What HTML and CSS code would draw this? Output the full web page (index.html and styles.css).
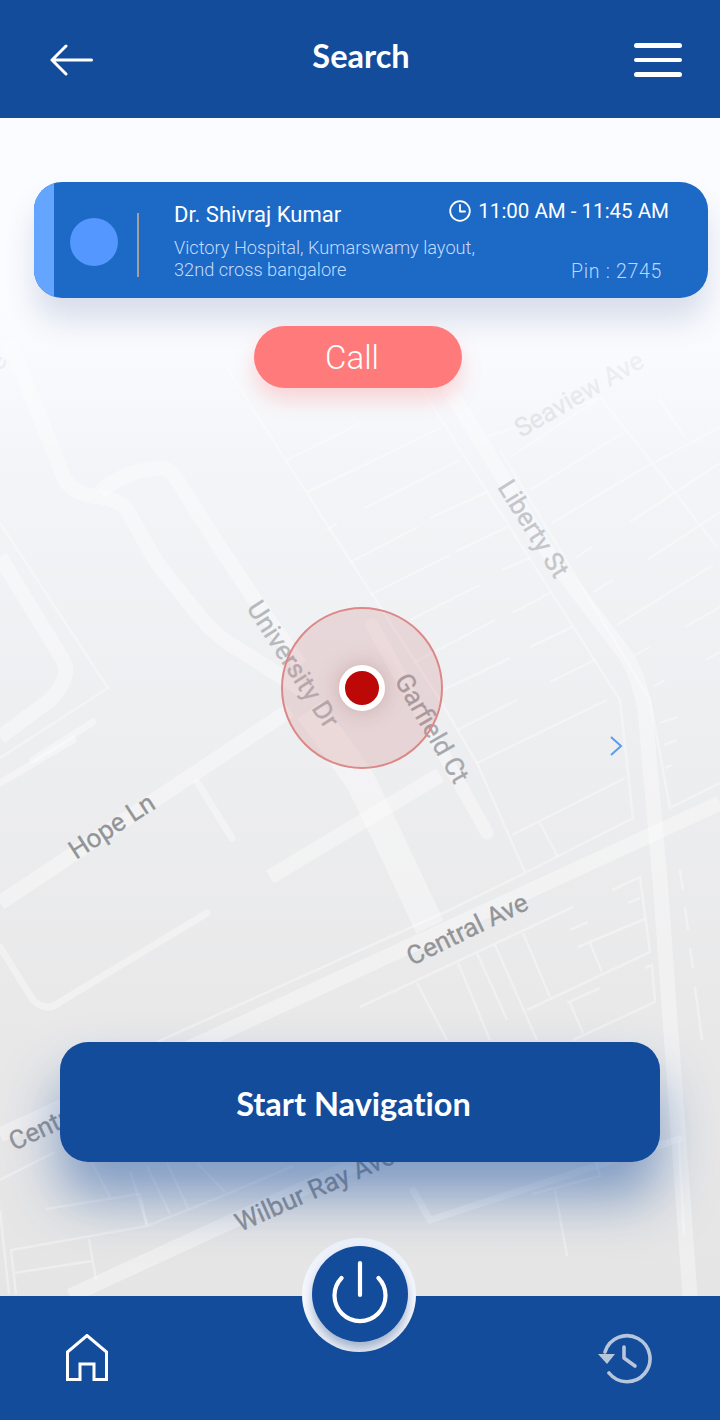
FILE: index.html
```html
<!DOCTYPE html>
<html lang="en">
<head>
<meta charset="utf-8">
<title>Search</title>
<link rel="stylesheet" href="styles.css">
</head>
<body>
<div class="app">
  <header class="topbar">
    <svg class="icon-back" viewBox="0 0 43 32" width="43" height="32"><path d="M41.5 16H2M16 2L2 16l14 14" /></svg>
    <h1 class="title">Search</h1>
    <div class="burger"><span></span><span></span><span></span></div>
  </header>
  <main class="stage">
    <svg class="map" viewBox="0 118 720 1178" preserveAspectRatio="none">
      <g class="road-wide">
        <path d="M8 340L33 400L65 480Q75 495 100 497Q120 500 127 510L157 563L200 617Q220 640 240 650L310 695"/>
        <path d="M100 492Q125 470 160 468Q170 468 177 480L217 543L253 597L300 665"/>
        <path d="M0 557L63 660Q72 677 50 700L0 737"/>
        <path d="M0 903L290 710"/>
        <path d="M270 877L440 775"/>
        <path class="road-cap" d="M372 625L487 833"/>
        <path d="M430 360L460 407L553 560L627 657Q640 680 645 710L660 880L690 1296"/>
        <path d="M0 1135L720 803"/>
        <path d="M70 1296L300 1190L420 1135"/>
      </g>
      <g class="road-major">
        <path d="M310 710L360 780L383 827L430 927"/>
      </g>
      <g class="road-mid">
        <path d="M93 722L33 760"/>
        <path d="M73 740L0 783"/>
        <path d="M197 782L232 838"/>
        <path d="M0 947L33 1000Q47 1013 60 1002L207 913"/>
        <path d="M413 1190L430 1220L679 1139"/>
      </g>
      <g class="road-thin">
        <path d="M0 523L108 688L0 758"/>
        <path d="M225 365L247 400L440 700L477 763L525 872"/>
        <path d="M410 370L433 407L620 700L633 818L527 872L445 912L157 1042"/>
        <path d="M500 450L650 700L670 808L720 783"/>
        <path d="M512 835L625 778M540 823L558 857M457 730L517 700M477 763L607 700"/>
        <path d="M660 723L677 717M664 745L677 740M665 768L672 765"/>
        <path d="M360 1007L573 907M417 983L447 1040M458 963L490 1040M477 953L507 1020M495 945L537 1040M523 933L550 997"/>
        <path d="M527 1010L650 952L640 877L612 890M578 947L647 918M590 943L602 972M570 930L588 922M628 903L640 898M567 1003L600 988M570 1003L583 1033M573 1040L655 1002L652 965L645 968"/>
        <path d="M680 870L683 890M685 907L688 930M690 948L693 968M695 987L702 1040"/>
        <path d="M487 437L603 397M510 457L600 398L650 460L717 547M530 490L623 433M552 523L640 470L720 427M630 522L720 463M647 560L720 512"/>
        <path d="M575 558L592 547M593 592L613 580M617 625L713 565M685 627L720 607M635 655L650 647M653 687L665 680M705 660L720 652M658 397L685 437"/>
        <path d="M360 467L442 427M365 508L460 460M430 518L487 492M360 557L418 527M455 552L507 527M370 595L450 555M502 570L530 558M410 620L480 585M512 613L550 593M413 663L495 620M530 647L572 627M443 690L510 658M550 682L595 660"/>
        <path d="M287 460L360 423M307 492L360 467M327 530L337 523M350 563L360 557"/>
        <path d="M0 1180L55 1152M92 1163L110 1197M130 1171L147 1225M147 1166L170 1214M167 1163L188 1208M197 1163L225 1192"/>
        <path d="M46 1209L140 1194L147 1226L11 1250L16 1294M147 1226L220 1197L293 1166M14 1273L92 1261M89 1239L96 1280M0 1210L9 1294"/>
        <path d="M555 1190L567 1256M532 1194L600 1176L592 1149M679 1142L684 1235"/>
      </g>
      <text class="map-label faint" transform="translate(1 372) rotate(-60)">e</text>
      <text class="map-label faint" transform="translate(521 438) rotate(-30)">Seaview Ave</text>
      <text class="map-label pale" transform="translate(497 487) rotate(58)">Liberty St</text>
      <text class="map-label uni" transform="translate(246 608) rotate(57)">University Dr</text>
      <text class="map-label mid" transform="translate(394 680) rotate(60)">Garfield Ct</text>
      <text class="map-label dark" transform="translate(76 860) rotate(-33)">Hope Ln</text>
      <text class="map-label dark" transform="translate(412 966) rotate(-26)">Central Ave</text>
      <text class="map-label dark" transform="translate(14 1151) rotate(-25)">Central Ave</text>
      <text class="map-label dark" transform="translate(240 1232) rotate(-24)">Wilbur Ray Ave</text>
    </svg>
    <div class="map-fade"></div>
    <section class="card">
      <div class="card-stripe"></div>
      <div class="avatar"></div>
      <div class="rule"></div>
      <div class="card-info">
        <div class="doctor">Dr. Shivraj Kumar</div>
        <div class="address">Victory Hospital, Kumarswamy layout,<br>32nd cross bangalore</div>
      </div>
      <div class="card-meta">
        <div class="time">
          <svg class="icon-clock" viewBox="0 0 22 22" width="22" height="22"><circle cx="11" cy="11" r="9.8"/><path d="M11 5v6.5h5"/></svg>
          <span>11:00 AM - 11:45 AM</span>
        </div>
        <div class="pin">Pin : 2745</div>
      </div>
    </section>
    <div class="call">Call</div>
    <div class="radar"><div class="dot"></div></div>
    <svg class="chevron" viewBox="0 0 14 20" width="14" height="20"><path d="M2 1l10 9-10 9"/></svg>
    <div class="start">Start Navigation</div>
  </main>
  <footer class="tabbar">
    <svg class="icon-home" viewBox="0 0 42 47" width="42" height="47"><path d="M1.5 45.5V18L21 1.5 40.5 18v27.5H28V30H14v15.5z"/></svg>
    <svg class="icon-history" viewBox="0 0 56 52" width="56" height="52"><path class="arc" d="M7 20A23 23 0 1 1 11 41"/><path class="fill" d="M0 22h17l-8 10z"/><path class="arc" d="M26 15v11l11 8"/></svg>
  </footer>
  <div class="power">
    <div class="power-core">
      <svg viewBox="0 0 64 72" width="64" height="72"><path d="M32 5v32M13.5 20A25.5 25.5 0 1 0 50.5 20" /></svg>
    </div>
  </div>
</div>
</body>
</html>
```
FILE: styles.css
```css
* { box-sizing: border-box; }
html, body { margin: 0; padding: 0; }
body { width: 720px; height: 1420px; overflow: hidden; font-family: Roboto, "Liberation Sans", sans-serif; }
.app { position: relative; width: 720px; height: 1420px; display: flex; flex-direction: column; }
.topbar { height: 118px; background: #144c9c; display: grid; grid-template-columns: 1fr auto 1fr; align-items: center; padding: 0 38px 4px 50px; flex: none; position: relative; z-index: 2; }
.icon-back { margin-top: 6px; }
.icon-back path { fill: none; stroke: #fff; stroke-width: 3; stroke-linecap: round; stroke-linejoin: round; }
.title { margin: 0 0 4px -10px; font: 700 32.5px Lato, sans-serif; font-variant-ligatures: none; color: #fff; }
.burger { width: 48px; justify-self: end; display: flex; flex-direction: column; gap: 10px; margin-top: 6px; }
.burger span { height: 4.5px; border-radius: 3px; background: #fff; }
.stage { flex: 1; position: relative; background: linear-gradient(180deg, #fbfcff 0%, #f4f6f9 25%, #eeeff1 50%, #e9e9ea 75%, #e5e5e5 100%); display: flex; flex-direction: column; align-items: flex-start; padding: 64px 12px 0 34px; }
.map { position: absolute; left: 0; top: 0; width: 720px; height: 1178px; }
.map-fade { position: absolute; left: 0; top: 0; width: 720px; height: 340px; background: linear-gradient(180deg, #fbfcff 50%, rgba(248,250,253,0) 100%); }
.road-wide path { fill: none; stroke: rgba(255,255,255,.36); stroke-width: 15; stroke-linejoin: round; }
.road-wide .road-cap { stroke-linecap: round; stroke-width: 13; }
.road-major path { fill: none; stroke: rgba(255,255,255,.36); stroke-width: 30; stroke-linejoin: round; }
.road-mid path { fill: none; stroke: rgba(255,255,255,.36); stroke-width: 7; stroke-linecap: round; stroke-linejoin: round; }
.road-thin path { fill: none; stroke: rgba(255,255,255,.34); stroke-width: 2.5; }
.map-label { font: 400 26px Roboto, sans-serif; stroke-width: .3px; }
.faint { fill: #dcdee3; stroke: #dcdee3; }
.pale { fill: #c4c6ca; stroke: #c4c6ca; }
.uni { fill: #b6b8bc; stroke: #b6b8bc; }
.mid { fill: #a6a8ac; stroke: #a6a8ac; }
.dark { fill: #939497; stroke: #939497; }
.card { position: relative; width: 674px; height: 116px; flex: none; border-radius: 28px; background: #1c69c6; overflow: hidden; display: flex; align-items: flex-start; box-shadow: 0 22px 30px rgba(40,70,130,.16); color: #fff; }
.card-stripe { width: 20px; height: 116px; flex: none; background: #64a5ff; }
.avatar { width: 48px; height: 48px; border-radius: 50%; background: #5497ff; margin: 36px 0 0 16px; flex: none; }
.rule { width: 2px; height: 64px; background: #a79f97; margin: 31px 0 0 19px; flex: none; }
.card-info { margin: 20px 0 0 35px; width: 260px; flex: none; white-space: nowrap; }
.doctor { font-size: 22px; font-weight: 400; line-height: 25px; }
.address { margin-top: 10px; font-size: 18.2px; font-weight: 300; line-height: 22px; color: #c2dcff; }
.card-meta { margin-left: auto; flex: none; display: flex; flex-direction: column; align-items: flex-end; padding: 17px 39px 0 0; }
.time { display: flex; align-items: center; gap: 7px; font-size: 20.5px; font-weight: 400; line-height: 24px; white-space: nowrap; }
.icon-clock { fill: none; stroke: #fff; stroke-width: 1.8; stroke-linecap: round; stroke-linejoin: round; flex: none; }
.pin { font-size: 19.5px; font-weight: 300; line-height: 24px; color: #b9d7ff; margin-top: 37px; margin-right: 7px; letter-spacing: .7px; }
.call { position: relative; width: 208px; height: 62px; margin: 28px 0 0 220px; flex: none; border-radius: 31px; background: #ff7b7b; color: #fff; font-size: 33px; font-weight: 300; display: flex; align-items: center; justify-content: center; padding-right: 12px; box-shadow: 0 12px 20px rgba(255,120,120,.28); }
.radar { position: absolute; left: 281px; top: 489px; width: 162px; height: 162px; border-radius: 50%; border: 2px solid #dd8888; background: rgba(190,80,80,.16); display: flex; align-items: center; justify-content: center; }
.dot { width: 46px; height: 46px; border-radius: 50%; background: #bd0808; border: 6px solid #fff; box-shadow: 0 0 22px rgba(120,40,40,.25); }
.chevron { position: absolute; left: 609px; top: 618px; }
.chevron path { fill: none; stroke: #5b9bf0; stroke-width: 2; }
.start { position: absolute; left: 60px; top: 924px; width: 600px; height: 120px; border-radius: 28px; background: #144c9c; color: #fff; font: 700 32.5px Lato, sans-serif; font-variant-ligatures: none; display: flex; align-items: center; justify-content: center; padding: 2px 13px 0 0; box-shadow: 0 36px 54px rgba(25,80,160,.5); }
.tabbar { height: 124px; flex: none; background: #144c9c; display: flex; align-items: flex-start; justify-content: space-between; padding: 38px 66px 0 66px; position: relative; }
.icon-home { fill: none; stroke: #fff; stroke-width: 3; }
.icon-history { margin-top: -2px; }
.icon-history .arc { fill: none; stroke: #b8c6dc; stroke-width: 3.6; stroke-linecap: round; stroke-linejoin: round; }
.icon-history .fill { fill: #b8c6dc; }
.power { position: absolute; left: 302px; top: 1238px; width: 114px; height: 114px; border-radius: 50%; background: linear-gradient(180deg, #e9effa 0%, #f6f8fd 55%, #e6ebf4 100%); display: flex; align-items: flex-start; justify-content: center; padding: 8px 0 0 2px; }
.power-core { width: 96px; height: 96px; border-radius: 50%; background: #144c9c; display: flex; align-items: center; justify-content: center; box-shadow: 0 6px 9px rgba(20,60,120,.32); }
.power-core path { fill: none; stroke: #fff; stroke-width: 4.2; stroke-linecap: round; }
```
